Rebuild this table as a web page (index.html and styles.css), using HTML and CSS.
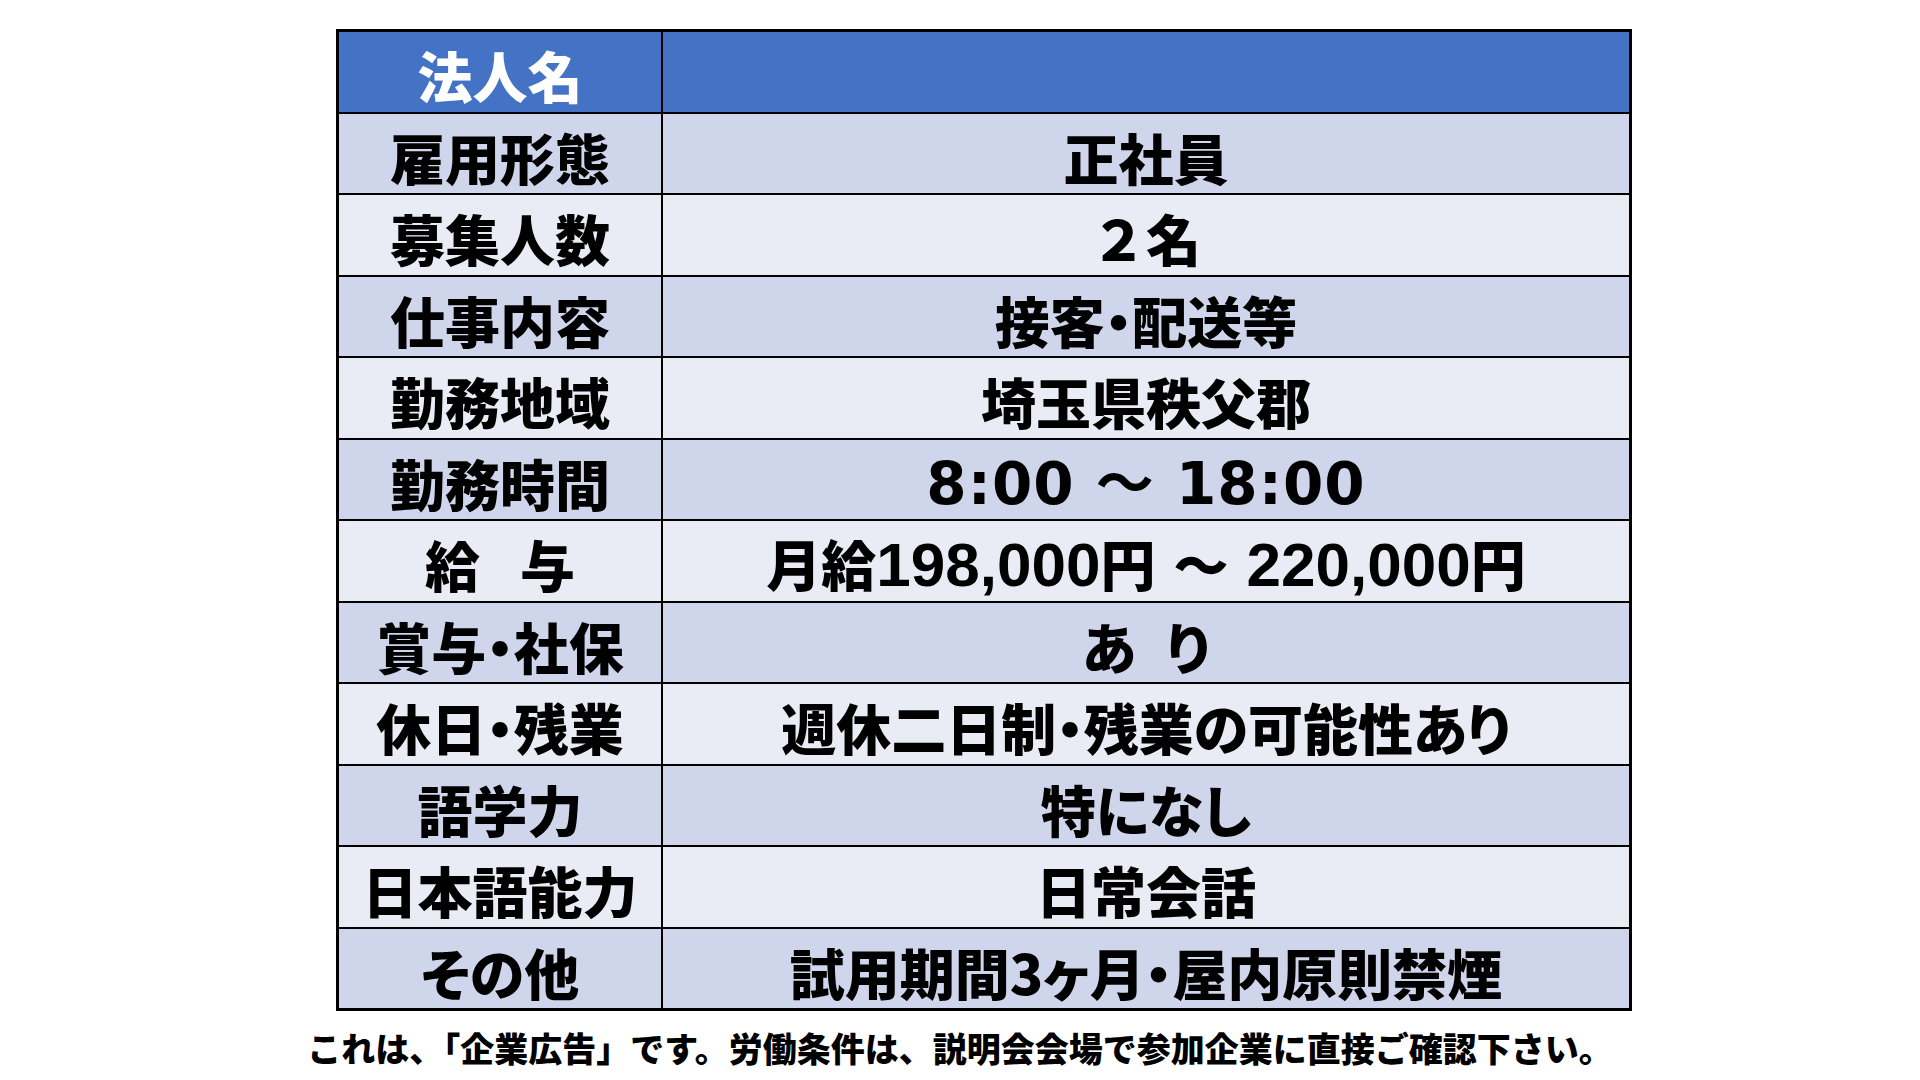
FILE: index.html
```html
<!DOCTYPE html>
<html lang="ja">
<head>
<meta charset="utf-8">
<title>求人票</title>
<link rel="stylesheet" href="styles.css">
</head>
<body>
<div class="page">
  <table class="job">
    <tr class="head">
      <th class="label">法人名</th>
      <td class="value"></td>
    </tr>
    <tr class="odd">
      <th class="label">雇用形態</th>
      <td class="value">正社員</td>
    </tr>
    <tr class="even">
      <th class="label">募集人数</th>
      <td class="value nopalt">２名</td>
    </tr>
    <tr class="odd">
      <th class="label">仕事内容</th>
      <td class="value">接客・配送等</td>
    </tr>
    <tr class="even">
      <th class="label">勤務地域</th>
      <td class="value">埼玉県秩父郡</td>
    </tr>
    <tr class="odd">
      <th class="label">勤務時間</th>
      <td class="value"><span class="time">8:00 ～ 18:00</span></td>
    </tr>
    <tr class="even">
      <th class="label">給<span class="gap"></span>与</th>
      <td class="value">月給<span class="num">198,000</span>円<span class="gap-t"></span>～<span class="gap-t"></span><span class="num">220,000</span>円</td>
    </tr>
    <tr class="odd">
      <th class="label">賞与・社保</th>
      <td class="value">あ<span class="gap-s"></span>り</td>
    </tr>
    <tr class="even">
      <th class="label">休日・残業</th>
      <td class="value">週休二日制・残業の可能性あり</td>
    </tr>
    <tr class="odd">
      <th class="label">語学力</th>
      <td class="value">特になし</td>
    </tr>
    <tr class="even">
      <th class="label">日本語能力</th>
      <td class="value">日常会話</td>
    </tr>
    <tr class="odd">
      <th class="label">その他</th>
      <td class="value">試用期間3ヶ月・屋内原則禁煙</td>
    </tr>
  </table>
  <p class="note">これは、「企業広告」です。労働条件は、説明会会場で参加企業に直接ご確認下さい。</p>
</div>
</body>
</html>
```
FILE: styles.css
```css
html, body {
  margin: 0;
  padding: 0;
  background: #ffffff;
}

body {
  width: 1920px;
  height: 1080px;
  overflow: hidden;
  font-family: "Noto Sans CJK JP", "Noto Sans", sans-serif;
  color: #000;
}

.page {
  padding-top: 29px;
}

.job {
  margin-left: 336px;
  width: 1296px;
  border-collapse: collapse;
  table-layout: fixed;
  border: 3px solid #000;
}

.job th,
.job td {
  border: 2px solid #000;
  height: 74.5px;
  padding: 5px 0 0 0;
  text-align: center;
  vertical-align: middle;
  font-size: 55px;
  line-height: 62px;
  font-weight: 900;
  white-space: nowrap;
  font-feature-settings: "palt";
}

.job td.nopalt {
  font-feature-settings: normal;
}

.job th.label {
  width: 322px;
}

.head th,
.head td {
  background: #4472c4;
  color: #ffffff;
}

.odd th,
.odd td {
  background: #cfd5ea;
}

.even th,
.even td {
  background: #e9ebf5;
}

.gap {
  display: inline-block;
  width: 40px;
}

.gap-s {
  display: inline-block;
  width: 30px;
}

.gap-t {
  display: inline-block;
  width: 18px;
}

.time {
  font-family: "DejaVu Sans", "Noto Sans CJK JP", sans-serif;
  font-weight: 700;
  font-size: 58px;
  letter-spacing: 1px;
}

.num {
  font-family: "Liberation Sans", "Noto Sans CJK JP", sans-serif;
  font-weight: 700;
  font-size: 62px;
}

.note {
  margin: 15px 0 0 0;
  text-align: center;
  font-size: 34px;
  line-height: 44px;
  font-weight: 900;
}
```
